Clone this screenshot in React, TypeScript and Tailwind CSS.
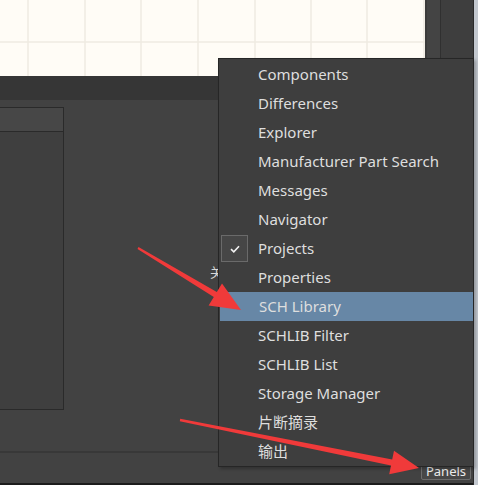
import React from 'react';

const items = [
  'Components',
  'Differences',
  'Explorer',
  'Manufacturer Part Search',
  'Messages',
  'Navigator',
  'Projects',
  'Properties',
  'SCH Library',
  'SCHLIB Filter',
  'SCHLIB List',
  'Storage Manager',
  '片断摘录',
  '输出',
];

const checked = 'Projects';
const active = 'SCH Library';

const font = { fontFamily: '"Noto Sans", "Noto Sans CJK SC", sans-serif' };

const GridCanvas: React.FC = () => (
  <div className="relative h-full w-[425px] bg-[#fffcf6]">
    <svg className="absolute inset-0" width="425" height="76">
      {[28, 85, 141, 198, 255, 311, 367, 424].map((x) => (
        <line key={x} x1={x} y1={0} x2={x} y2={76} stroke="#efebe2" strokeWidth={1.5} />
      ))}
      <line x1={0} y1={42} x2={425} y2={42} stroke="#efebe2" strokeWidth={1.5} />
    </svg>
  </div>
);

const Arrows: React.FC = () => (
  <svg className="pointer-events-none absolute inset-0" width="478" height="485">
    <polygon
      fill="#f03a3a"
      points="138.5,247.1 216.8,291.9 222,283.4 241,310 208.6,305.6 213.8,297.1 137.5,248.9"
    />
    <polygon
      fill="#f03a3a"
      points="180.2,418.8 392.2,459.6 394,450.7 419,468 389.2,474.3 391,465.4 179.8,421.2"
    />
  </svg>
);

const PanelsMenu: React.FC = () => (
  <div className="absolute left-[218px] top-[58px] w-[256px] border border-[#262626] bg-[#3e3e3e] pt-[1px] shadow-[2px_2px_3px_rgba(0,0,0,0.25)]">
    {items.map((label) => (
      <div
        key={label}
        className={`relative flex h-[29px] items-center pl-[39px] text-[15px] text-[#dedede] ${
          label === active ? 'ml-[1px] bg-[#6787a6] pl-[38px]' : ''
        }`}
        style={font}
      >
        {label === checked && (
          <span className="absolute left-[2px] top-[1px] flex h-[27px] w-[27px] items-center justify-center border border-[#6a6a6a] bg-[#464646]">
            <svg width="10" height="8" viewBox="0 0 10 8">
              <path d="M1 4.2 L3.8 6.8 L9 1.2" fill="none" stroke="#f2f2f2" strokeWidth="1.6" />
            </svg>
          </span>
        )}
        <span>{label}</span>
      </div>
    ))}
  </div>
);

export default function App() {
  return (
    <div className="relative flex h-[485px] w-[478px] overflow-hidden bg-[#424242]" style={font}>
      <div className="flex w-[473px] flex-col">
        <div className="flex h-[76px]">
          <GridCanvas />
          <div className="flex flex-1">
            <div className="w-[2px] bg-[#3b3b3b]" />
            <div className="w-[13px] bg-[#444444]" />
            <div className="flex-1 border-l border-[#303030] bg-[#3e3e3e]" />
          </div>
        </div>
        <div className="h-[24px] bg-[#363636]" />
        <div className="h-[351px] pt-[7px]">
          <div className="flex h-[303px] w-[64px] flex-col border-r border-b border-[#2a2a2a] bg-[#3f3f3f]">
            <div className="h-[25px] border-y border-[#2a2a2a] bg-[#474747]" />
            <div className="flex-1" />
          </div>
        </div>
        <div className="h-[2px] bg-[#383838]" />
        <div className="flex h-[30px] items-end justify-end pb-[3px] pr-[2px]">
          <button
            type="button"
            className="flex h-[18px] w-[50px] items-center justify-center rounded-[2px] border border-[#6c6c6c] bg-[#474747] pt-[1px] text-[13px] text-[#ececec]"
          >
            Panels
          </button>
        </div>
        <div className="h-[2px] bg-[#1c1c1c]" />
      </div>
      <div className="flex w-[5px]">
        <div className="w-[1px] bg-[#2a2a2a]" />
        <div className="flex-1 bg-[#c3c8cf]" />
      </div>

      <span className="absolute left-[210px] top-[263px] text-[13px] text-[#d8d8d8]">关</span>
      <PanelsMenu />
      <Arrows />
    </div>
  );
}
